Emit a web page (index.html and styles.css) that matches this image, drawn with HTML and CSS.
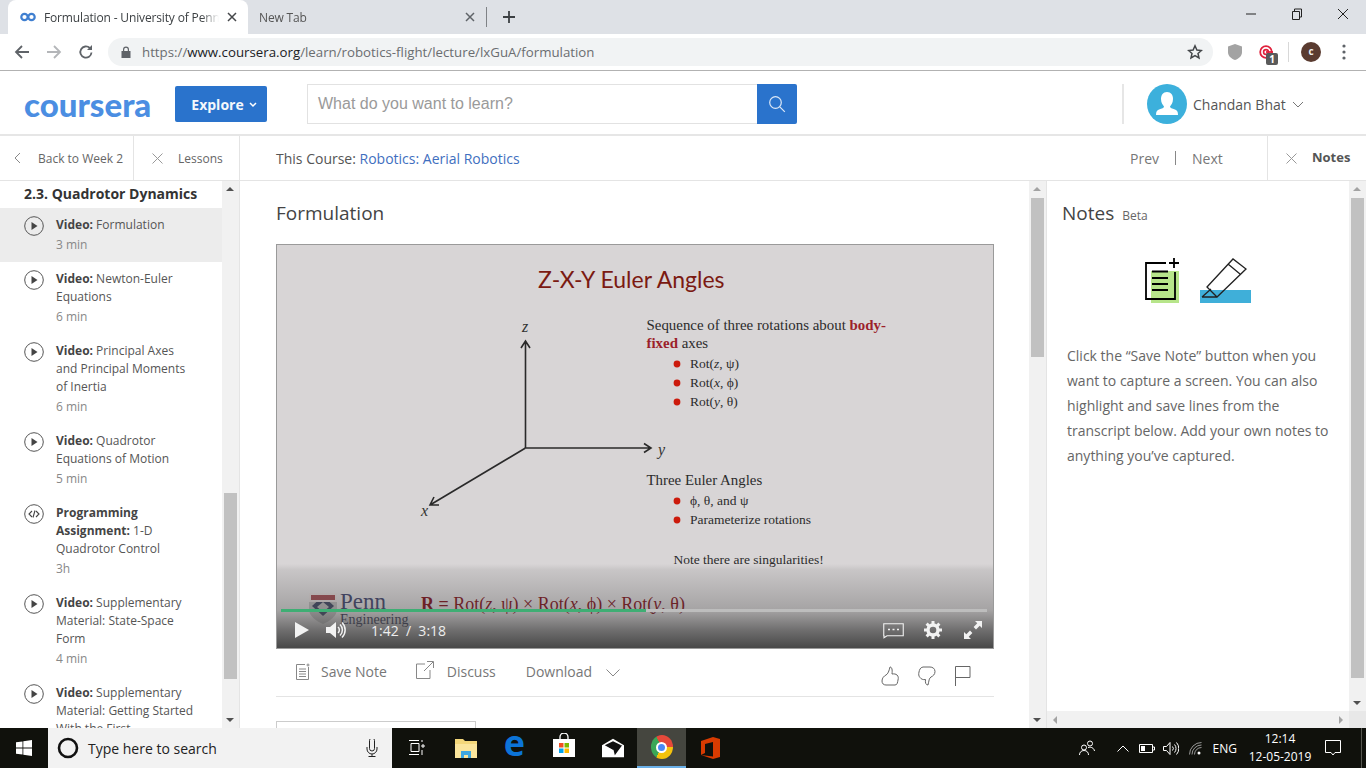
FILE: index.html
```html
<!DOCTYPE html>
<html lang="en">
<head>
    <meta charset="UTF-8">
    <title>Formulation - University of Pennsylvania | Coursera</title>
    <link rel="stylesheet" href="styles.css">
</head>
<body>
    <!-- browser chrome -->
    <div class="tabstrip">
        <div class="tab tab-active">
            <svg class="tab-icon" viewBox="0 0 16 10"><circle cx="4.500" cy="5" r="3.200" fill="none" stroke="#3f7fd0" stroke-width="2.200"/><circle cx="11.500" cy="5" r="3.200" fill="none" stroke="#3f7fd0" stroke-width="2.200"/></svg>
            <span class="tab-title">Formulation - University of Pennsylvania</span>
            <svg class="tab-close" viewBox="0 0 10 10"><path d="M1 1l8 8M9 1l-8 8" stroke="#45474a" stroke-width="1.500"/></svg>
        </div>
        <div class="tab">
            <span class="tab-title">New Tab</span>
            <svg class="tab-close" viewBox="0 0 10 10"><path d="M1 1l8 8M9 1l-8 8" stroke="#5f6368" stroke-width="1.500"/></svg>
        </div>
        <div class="tab-sep"></div>
        <svg class="tab-new" viewBox="0 0 12 12"><path d="M6 0v12M0 6h12" stroke="#3c4043" stroke-width="1.800"/></svg>
        <div class="window-btns">
            <svg viewBox="0 0 12 12"><path d="M1 6h10" stroke="#222" stroke-width="1"/></svg>
            <svg viewBox="0 0 12 12"><path d="M1.500 3.500h7v8h-7zM3.500 3.500v-2.500h7v8h-2" fill="none" stroke="#222" stroke-width="1"/></svg>
            <svg viewBox="0 0 12 12"><path d="M1 1l10 10M11 1l-10 10" stroke="#222" stroke-width="1"/></svg>
        </div>
    </div>
    <div class="toolbar">
        <svg class="nav-icon" viewBox="0 0 16 16"><path d="M15 8H2M8 2L2 8l6 6" fill="none" stroke="#5f6368" stroke-width="1.800"/></svg>
        <svg class="nav-icon" viewBox="0 0 16 16"><path d="M1 8h13M8 2l6 6-6 6" fill="none" stroke="#b4b6b9" stroke-width="1.800"/></svg>
        <svg class="nav-icon" viewBox="0 0 16 16"><path d="M13.500 8.500A5.600 5.600 0 1 1 11.800 4" fill="none" stroke="#5f6368" stroke-width="1.800"/><path d="M14 1v5H9z" fill="#5f6368"/></svg>
        <div class="omnibox">
            <svg class="lock" viewBox="0 0 10 12"><path d="M2 5V3.500a3 3 0 0 1 6 0V5h1.500v7H.5V5zM3.200 5h3.600V3.500a1.800 1.800 0 0 0-3.600 0z" fill="#5f6368"/></svg>
            <span class="url">https://<b>www.coursera.org</b>/learn/robotics-flight/lecture/lxGuA/formulation</span>
            <svg class="star" viewBox="0 0 16 16"><path d="M8 1.800l1.900 4.200 4.500.5-3.400 3 1 4.500L8 11.700 4 14l1-4.500-3.400-3 4.500-.5z" fill="none" stroke="#44474a" stroke-width="1.500"/></svg>
        </div>
        <svg class="ext-shield" viewBox="0 0 14 16"><path d="M7 0l7 2.500V8c0 4-3 6.500-7 8-4-1.500-7-4-7-8V2.500z" fill="#a3a3a3"/></svg>
        <div class="ext-target">
            <svg viewBox="0 0 14 14"><circle cx="7" cy="7" r="5.800" fill="none" stroke="#e0213c" stroke-width="1.800"/><circle cx="7" cy="7" r="2.400" fill="none" stroke="#e0213c" stroke-width="1.600"/><path d="M7 7h7" stroke="#e0213c" stroke-width="1.800"/></svg>
            <span class="ext-badge">1</span>
        </div>
        <div class="toolbar-sep"></div>
        <div class="profile-dot">c</div>
        <svg class="menu-dots" viewBox="0 0 4 16"><circle cx="2" cy="2" r="1.600"/><circle cx="2" cy="8" r="1.600"/><circle cx="2" cy="14" r="1.600"/></svg>
    </div>

    <!-- site header -->
    <header class="site-header">
        <div class="logo">coursera</div>
        <button class="explore">Explore <svg viewBox="0 0 8 6"><path d="M1 1l3 3 3-3" fill="none" stroke="#fff" stroke-width="1.500"/></svg></button>
        <div class="search">
            <div class="search-input">What do you want to learn?</div>
            <div class="search-btn"><svg viewBox="0 0 18 18"><circle cx="7.500" cy="7.500" r="5.800" fill="none" stroke="#dce8f7" stroke-width="1.200"/><path d="M11.800 11.800l5 5" stroke="#dce8f7" stroke-width="1.200"/></svg></div>
        </div>
        <div class="user">
            <svg class="avatar" viewBox="0 0 40 40"><circle cx="20" cy="20" r="20" fill="#3cb0dc"/><path d="M20 8c4 0 6 3 6 7s-2 6-3 7.500c0 1.500 2 2 5 3 2 .7 3 2 3 5.500H9c0-3.500 1-4.800 3-5.500 3-1 5-1.500 5-3C16 21 14 19 14 15s2-7 6-7z" fill="#fff"/></svg>
            <span class="user-name">Chandan Bhat</span>
            <svg class="user-caret" viewBox="0 0 12 7"><path d="M1 1l5 5 5-5" fill="none" stroke="#777" stroke-width="1"/></svg>
        </div>
    </header>

    <!-- course bar -->
    <div class="course-bar">
        <div class="bar-cell cell-back">
            <svg viewBox="0 0 7 12"><path d="M6 1L1 6l5 5" fill="none" stroke="#888" stroke-width="1"/></svg>
            <span>Back to Week 2</span>
        </div>
        <div class="bar-cell cell-lessons">
            <svg viewBox="0 0 11 11"><path d="M.5.5l10 10M10.500.5l-10 10" stroke="#999" stroke-width="1"/></svg>
            <span>Lessons</span>
        </div>
        <div class="this-course">This Course: <a>Robotics: Aerial Robotics</a></div>
        <div class="pager"><span>Prev</span><i></i><span>Next</span></div>
        <div class="bar-cell cell-notes">
            <svg viewBox="0 0 11 11"><path d="M.5.5l10 10M10.500.5l-10 10" stroke="#999" stroke-width="1"/></svg>
            <b>Notes</b>
        </div>
    </div>

    <div class="main">
        <!-- lessons list -->
        <aside class="sidebar">
            <div class="lesson-list">
                <h3>2.3. Quadrotor Dynamics</h3>
                <div class="lesson current">
                    <svg class="lesson-icon" viewBox="0 0 20 20"><circle cx="10" cy="10" r="9.300" fill="none" stroke="#555"/><path d="M7.500 6l6 4-6 4z" fill="#444"/></svg>
                    <div class="lesson-text"><p><b>Video:</b> Formulation</p><small>3 min</small></div>
                </div>
                <div class="lesson">
                    <svg class="lesson-icon" viewBox="0 0 20 20"><circle cx="10" cy="10" r="9.300" fill="none" stroke="#555"/><path d="M7.500 6l6 4-6 4z" fill="#444"/></svg>
                    <div class="lesson-text"><p><b>Video:</b> Newton-Euler Equations</p><small>6 min</small></div>
                </div>
                <div class="lesson">
                    <svg class="lesson-icon" viewBox="0 0 20 20"><circle cx="10" cy="10" r="9.300" fill="none" stroke="#555"/><path d="M7.500 6l6 4-6 4z" fill="#444"/></svg>
                    <div class="lesson-text"><p><b>Video:</b> Principal Axes and Principal Moments of Inertia</p><small>6 min</small></div>
                </div>
                <div class="lesson">
                    <svg class="lesson-icon" viewBox="0 0 20 20"><circle cx="10" cy="10" r="9.300" fill="none" stroke="#555"/><path d="M7.500 6l6 4-6 4z" fill="#444"/></svg>
                    <div class="lesson-text"><p><b>Video:</b> Quadrotor Equations of Motion</p><small>5 min</small></div>
                </div>
                <div class="lesson">
                    <svg class="lesson-icon" viewBox="0 0 20 20"><circle cx="10" cy="10" r="9.300" fill="none" stroke="#555"/><path d="M8 7l-3 3 3 3M12 7l3 3-3 3M11 6.500l-2 7" fill="none" stroke="#444" stroke-width="1.100"/></svg>
                    <div class="lesson-text"><p><b>Programming Assignment:</b> 1-D Quadrotor Control</p><small>3h</small></div>
                </div>
                <div class="lesson">
                    <svg class="lesson-icon" viewBox="0 0 20 20"><circle cx="10" cy="10" r="9.300" fill="none" stroke="#555"/><path d="M7.500 6l6 4-6 4z" fill="#444"/></svg>
                    <div class="lesson-text"><p><b>Video:</b> Supplementary Material: State-Space Form</p><small>4 min</small></div>
                </div>
                <div class="lesson">
                    <svg class="lesson-icon" viewBox="0 0 20 20"><circle cx="10" cy="10" r="9.300" fill="none" stroke="#555"/><path d="M7.500 6l6 4-6 4z" fill="#444"/></svg>
                    <div class="lesson-text"><p><b>Video:</b> Supplementary Material: Getting Started With the First</p></div>
                </div>
            </div>
            <div class="vscroll">
                <div class="arrow-up"></div>
                <div class="track"><div class="thumb thumb-side"></div></div>
                <div class="arrow-down"></div>
            </div>
        </aside>

        <!-- lecture -->
        <section class="content">
            <h1>Formulation</h1>
            <div class="video">
                <svg class="slide" viewBox="276 244 718 405">
                    <text x="538" y="288" class="slide-title">Z-X-Y Euler Angles</text>
                    <g class="axis">
                        <path d="M525.500 448V341M521 348l4.500-7 4.500 7"/>
                        <path d="M525.500 448H651M644 443.500l7 4.500-7 4.500"/>
                        <path d="M525.500 448L430 505M434 497l-4 8 9 0"/>
                    </g>
                    <text x="522" y="332" class="axis-label">z</text>
                    <text x="658" y="455" class="axis-label">y</text>
                    <text x="421" y="516" class="axis-label">x</text>
                    <text x="646.500" y="330" class="slide-text">Sequence of three rotations about <tspan class="slide-em">body-</tspan></text>
                    <text x="646.500" y="348" class="slide-text"><tspan class="slide-em">fixed</tspan> axes</text>
                    <circle cx="677" cy="364" r="3.400" class="bullet"/>
                    <text x="690" y="368" class="slide-small">Rot(<tspan font-style="italic">z</tspan>, ψ)</text>
                    <circle cx="677" cy="383" r="3.400" class="bullet"/>
                    <text x="690" y="387" class="slide-small">Rot(<tspan font-style="italic">x</tspan>, ϕ)</text>
                    <circle cx="677" cy="402" r="3.400" class="bullet"/>
                    <text x="690" y="406" class="slide-small">Rot(<tspan font-style="italic">y</tspan>, θ)</text>
                    <text x="646.500" y="485" class="slide-text">Three Euler Angles</text>
                    <circle cx="677" cy="501" r="3.400" class="bullet"/>
                    <text x="690" y="505" class="slide-small">ϕ, θ, and ψ</text>
                    <circle cx="677" cy="520" r="3.400" class="bullet"/>
                    <text x="690" y="524" class="slide-small">Parameterize rotations</text>
                    <text x="673.500" y="564" class="slide-small">Note there are singularities!</text>
                    <path d="M309 602h28v7c0 7-7 12-14 15-7-3-14-8-14-15z" fill="#b5b3b4"/>
                    <path d="M323 596l11 10-11 10-11-10z" fill="#3e4560"/>
                    <path d="M323 602l6 5-6 5-6-5z" fill="#b5b3b4"/>
                    <path d="M309 593h28v9h-28z" fill="#d9d2d2"/>
                    <path d="M311 595h24v5h-24z" fill="#9c4a50"/>
                    <text x="340" y="609" class="penn">Penn</text>
                    <text x="340" y="624" class="penn-sub">Engineering</text>
                    <text x="421" y="610" class="formula"><tspan font-weight="bold">R =</tspan> Rot(<tspan font-style="italic">z</tspan>, ψ) × Rot(<tspan font-style="italic">x</tspan>, ϕ) × Rot(<tspan font-style="italic">y</tspan>, θ)</text>
                </svg>
                <div class="video-shade"></div>
                <div class="progress"><div class="progress-done"></div></div>
                <div class="video-controls">
                    <svg class="vc-play" viewBox="0 0 14 16"><path d="M0 0l14 8-14 8z" fill="#f2f2f2"/></svg>
                    <svg class="vc-vol" viewBox="0 0 20 18"><path d="M0 6h4l6-5v16l-6-5H0z" fill="#f2f2f2"/><path d="M12 6a4 4 0 0 1 0 6M14 3.500a7.500 7.500 0 0 1 0 11M16 1.500a10.500 10.500 0 0 1 0 15" fill="none" stroke="#f2f2f2" stroke-width="1.500"/></svg>
                    <span class="vc-time">1:42 &nbsp;/&nbsp; 3:18</span>
                    <svg class="vc-cc" viewBox="0 0 21 18"><path d="M.75 2.750h19.500v12H4l-3 2v-2H.75z" fill="none" stroke="#f2f2f2" stroke-width="1.100"/><path d="M5 8.500h2M9.500 8.500h2M14 8.500h2" stroke="#f2f2f2" stroke-width="1.600"/></svg>
                    <svg class="vc-gear" viewBox="0 0 18 18"><circle cx="9" cy="9" r="5" fill="none" stroke="#f2f2f2" stroke-width="3.400"/><path d="M9 0v4M9 14v4M0 9h4M14 9h4M2.600 2.600l2.900 2.900M12.500 12.500l2.900 2.900M15.400 2.600l-2.900 2.900M5.500 12.500l-2.900 2.900" stroke="#f2f2f2" stroke-width="3"/></svg>
                    <svg class="vc-full" viewBox="0 0 18 18"><path d="M11 0h7v7l-2.300-2.300-3.700 3.700-2.400-2.400 3.700-3.700zM0 18v-7l2.300 2.300 3.700-3.700 2.400 2.400-3.700 3.700L7 18z" fill="#f2f2f2"/></svg>
                </div>
            </div>
            <div class="actions">
                <div class="action action-save">
                    <svg viewBox="0 0 14 17"><path d="M9 1.500H.5v15h12V4M3 6h7M3 8.500h7M3 11h7M3 13.500h7M10.500 2h3M12 .5v3" fill="none" stroke="#888"/></svg>
                    <span>Save Note</span>
                </div>
                <div class="action action-discuss">
                    <svg viewBox="0 0 18 18"><path d="M9 3H.5v14.500H14V9M8 10L17 1M11 .5h6.500V7" fill="none" stroke="#888"/></svg>
                    <span>Discuss</span>
                </div>
                <div class="action action-download">
                    <span>Download</span>
                    <svg viewBox="0 0 14 8"><path d="M.5.5L7 7l6.500-6.500" fill="none" stroke="#888"/></svg>
                </div>
                <div class="feedback">
                    <svg viewBox="0 0 18 20"><path d="M5 9c2-1 3-4 4-8 2 0 2.500 3 2 7 2-.3 4 0 5 1 1.500 1.500 1.500 3 1 5-.5 2-.5 5-3 5H5c-2.500 0-4-1.500-4-4 0-3 2-5 4-6z" fill="none" stroke="#666"/></svg>
                    <svg viewBox="0 0 18 20"><path d="M13 11c-2 1-2 4-3 8-2 0-3-2-2.500-5.500C5 14 3 13 2 11.500.5 10 .5 8 1 6c.5-2 1-4.500 4-5h7c2.500 0 5 1.500 5 4.500s-2 4.500-4 5.500z" fill="none" stroke="#666"/></svg>
                    <svg class="flag" viewBox="0 0 16 20"><path d="M.5 20V.5h14.500v11H.5" fill="none" stroke="#666"/></svg>
                </div>
            </div>
            <div class="cut-box"></div>
        </section>
        <div class="vscroll vscroll-content">
            <div class="arrow-up"></div>
            <div class="track"><div class="thumb thumb-content"></div></div>
            <div class="arrow-down"></div>
        </div>

        <!-- notes -->
        <aside class="notes">
            <div class="notes-body">
                <div class="notes-head"><h2>Notes</h2><span>Beta</span></div>
                <svg class="notes-art" viewBox="1144 257 108 47">
                    <rect x="1151" y="271" width="28" height="32" fill="#b7e58a"/>
                    <path d="M1166 263h-20v36h29v-27" fill="none" stroke="#000" stroke-width="1.800"/>
                    <path d="M1174 258v10M1169 263h10" stroke="#000" stroke-width="1.800"/>
                    <path d="M1152 271.500h16M1152 278h16M1152 284h16M1152 290h16" stroke="#000" stroke-width="1.800"/>
                    <rect x="1200" y="290" width="51" height="13" fill="#3fafd9"/>
                    <path d="M1207 287l26-28 13 10-29 28zM1228 264l12 10M1207 287l3 3 4 4 3 3M1202 297h15M1202 297l9-8" fill="none" stroke="#222" stroke-width="1.300"/>
                </svg>
                <p>Click the “Save Note” button when you want to capture a screen. You can also highlight and save lines from the transcript below. Add your own notes to anything you’ve captured.</p>
            </div>
            <div class="hscroll">
                <div class="arrow-left"></div>
                <div class="arrow-right"></div>
            </div>
        </aside>
        <div class="vscroll vscroll-notes">
            <div class="arrow-up"></div>
            <div class="track"><div class="thumb thumb-notes"></div></div>
            <div class="arrow-down"></div>
            <div class="corner"></div>
        </div>
    </div>

    <!-- windows taskbar -->
    <footer class="taskbar">
        <div class="start">
            <svg viewBox="0 0 16 16"><path d="M0 2.300l6.500-.9v6.200H0zM7.300 1.300L16 0v7.600H7.300zM0 8.400h6.500v6.200L0 13.700zM7.300 8.400H16V16l-8.700-1.300z" fill="#fff"/></svg>
        </div>
        <div class="task-search">
            <svg class="cortana" viewBox="0 0 22 22"><circle cx="11" cy="11" r="9" fill="none" stroke="#111" stroke-width="2.600"/></svg>
            <span>Type here to search</span>
            <svg class="mic" viewBox="0 0 12 18"><path d="M3.500 1.500a2.500 2.500 0 0 1 5 0v8a2.500 2.500 0 0 1-5 0zM1 8v2a5 5 0 0 0 10 0V8M6 15v2.500M2.500 17.500h7" fill="none" stroke="#222"/></svg>
        </div>
        <div class="task-item">
            <svg viewBox="0 0 16 16" class="tk-view"><path d="M0 .5h10M2 3.500h8v8H2zM0 14.500h10M13 0v2M13 5h2v2h-2zM13 10v5" fill="none" stroke="#fff"/></svg>
        </div>
        <div class="task-item">
            <svg viewBox="0 0 22 22" class="tk-app"><path d="M0 2h8l2 2h12v17H0z" fill="#f4d77a"/><path d="M0 7h22v14H0z" fill="#fbe59c"/><path d="M6 14h10v7h-3v-3H9v3H6z" fill="#3fa7e0"/></svg>
        </div>
        <div class="task-item">
            <span class="edge">e</span>
        </div>
        <div class="task-item">
            <svg viewBox="0 0 22 24" class="tk-app tk-store"><path d="M7 7V4a4 4 0 0 1 8 0v3" fill="none" stroke="#fff" stroke-width="1.300"/><path d="M0 6h22v18H0z" fill="#fff"/><path d="M6 10h4.500v4.500H6z" fill="#f25022"/><path d="M11.500 10H16v4.500h-4.500z" fill="#7fba00"/><path d="M6 15.500h4.500V20H6z" fill="#00a4ef"/><path d="M11.500 15.500H16V20h-4.500z" fill="#ffb900"/></svg>
        </div>
        <div class="task-item">
            <svg viewBox="0 0 24 20" class="tk-app"><path d="M0 7L12 0l12 7v13H0z" fill="#fff"/><path d="M3 7l9-4.500L21 7 12 12z" fill="#111"/><path d="M6 8l16-1-8 11-1.500-6z" fill="#111"/></svg>
        </div>
        <div class="task-item task-active">
            <div class="chrome"><div class="chrome-eye"></div></div>
        </div>
        <div class="task-item">
            <svg viewBox="0 0 20 22" class="tk-app"><path d="M0 4L12 0l7 2v18l-7 2L0 18l12 1.500V5L4 7v9l-4 2z" fill="#d83b01"/></svg>
        </div>
        <div class="tray">
            <svg class="tr-people" viewBox="0 0 16 16"><circle cx="5" cy="7.500" r="2.500" fill="none" stroke="#fff"/><circle cx="11" cy="3.500" r="2.500" fill="none" stroke="#fff"/><path d="M.5 15c0-2.500 1.500-4.500 4.500-4.500S9.500 12.500 9.500 15M9 7.500c3-1 6 .5 6.500 3.500" fill="none" stroke="#fff"/></svg>
            <svg class="tr-chev" viewBox="0 0 12 7"><path d="M.5 6.500L6 1l5.500 5.500" fill="none" stroke="#fff"/></svg>
            <svg class="tr-batt" viewBox="0 0 16 9"><path d="M.5.5h13v8H.5zM14 3h1.500v3H14" fill="none" stroke="#fff"/><path d="M2 2h4v5H2z" fill="#fff"/></svg>
            <svg class="tr-vol" viewBox="0 0 16 13"><path d="M.5 4.500h3l3.500-4v12l-3.500-4h-3zM9.500 4.500a3 3 0 0 1 0 4M11.500 2.500a6 6 0 0 1 0 8M13.500.5a9 9 0 0 1 0 12" fill="none" stroke="#fff"/></svg>
            <svg class="tr-wifi" viewBox="0 0 14 13"><path d="M.5 12.500a12 12 0 0 1 12-12M3 12.500a9.500 9.500 0 0 1 9.500-9.500M5.500 12.500a7 7 0 0 1 7-7" fill="none" stroke="#bbb" stroke-width=".8"/><circle cx="10" cy="11" r="1.500" fill="#fff"/></svg>
            <span class="tr-lang">ENG</span>
            <div class="tr-clock"><span>12:14</span><span>12-05-2019</span></div>
            <svg class="tr-note" viewBox="0 0 16 16"><path d="M.5.5h15v12H10l-2 2.500-2-2.500H.5z" fill="none" stroke="#fff"/></svg>
            <div class="tr-desk"></div>
        </div>
    </footer>
</body>
</html>
```

FILE: styles.css
```css
* {
    box-sizing: border-box;
}
html, body {
    margin: 0;
    padding: 0;
}
body {
    width: 1366px;
    height: 768px;
    overflow: hidden;
    background: #fff;
    font-family: "Open Sans", sans-serif;
    color: #444;
    display: flex;
    flex-direction: column;
}
svg {
    display: block;
    flex: none;
}

/* tab strip */
.tabstrip {
    height: 34px;
    flex: none;
    background: #dee1e6;
    display: flex;
    padding-left: 8px;
    font-size: 12px;
}
.tab {
    width: 240px;
    height: 34px;
    padding: 0 7px 0 12px;
    display: flex;
    align-items: center;
    color: #555;
}
.tab:nth-child(2) {
    width: 238px;
    padding-left: 11px;
}
.tab-active {
    background: #fff;
    border-radius: 8px 8px 0 0;
    color: #3c4043;
}
.tab-icon {
    width: 16px;
    height: 10px;
    margin-right: 8px;
}
.tab-title {
    flex: 1;
    overflow: hidden;
    white-space: nowrap;
    letter-spacing: -.15px;
    -webkit-mask-image: linear-gradient(to right, #000 90%, transparent);
}
.tab-close {
    width: 10px;
    height: 10px;
    margin: 0 4px 0 8px;
}
.tab-sep {
    width: 1px;
    height: 20px;
    margin: 7px 0;
    background: #7f8286;
}
.tab-new {
    width: 12px;
    height: 12px;
    margin: 11px 0 0 16px;
}
.window-btns {
    margin-left: auto;
    display: flex;
}
.window-btns svg {
    width: 12px;
    height: 12px;
    margin: 8px 17px 0 17px;
}

/* toolbar */
.toolbar {
    height: 37px;
    flex: none;
    display: flex;
    align-items: center;
    border-bottom: 1px solid #b2b2b2;
    padding: 0 0 1px 14px;
    background: #fff;
}
.nav-icon {
    width: 16px;
    height: 16px;
    margin-right: 16px;
}
.nav-icon:nth-child(3) {
    margin-right: 14px;
}
.omnibox {
    width: 1105px;
    height: 28px;
    border-radius: 14px;
    background: #f1f3f4;
    display: flex;
    align-items: center;
    padding: 0 10px 0 13px;
}
.lock {
    width: 10px;
    height: 12px;
    margin-right: 11px;
}
.url {
    flex: 1;
    font-size: 13.270px;
    color: #6a6d70;
    white-space: nowrap;
}
.url b {
    font-weight: 400;
    color: #202124;
}
.star {
    width: 16px;
    height: 16px;
}
.ext-shield {
    width: 14px;
    height: 16px;
    margin-left: 15px;
}
.ext-target {
    position: relative;
    width: 14px;
    height: 14px;
    margin-left: 17px;
}
.ext-badge {
    position: absolute;
    left: 7px;
    top: 8px;
    width: 12px;
    height: 12px;
    border-radius: 2px;
    background: #5a5a5a;
    color: #fff;
    font-size: 10px;
    font-weight: 700;
    line-height: 12px;
    text-align: center;
}
.toolbar-sep {
    width: 1px;
    height: 20px;
    margin-left: 15px;
    background: #d8d8d8;
}
.profile-dot {
    width: 20px;
    height: 20px;
    margin-left: 12px;
    border-radius: 50%;
    background: #5a3b30;
    color: #eee;
    font-size: 10px;
    font-weight: 700;
    line-height: 19px;
    text-align: center;
}
.menu-dots {
    width: 4px;
    height: 16px;
    margin-left: 21px;
    fill: #5f6368;
}

/* site header */
.site-header {
    height: 65px;
    flex: none;
    display: flex;
    align-items: center;
    border-bottom: 2px solid #e6e6e6;
    padding: 3px 0 0 24px;
}
.logo {
    width: 151px;
    font-family: "Lato", sans-serif;
    font-size: 33px;
    font-weight: 900;
    line-height: 36px;
    color: #4b8ee2;
}
.explore {
    width: 92px;
    height: 36px;
    border: 0;
    border-radius: 2px;
    padding: 0 0 0 6px;
    background: #2a73cc;
    color: #f4f8fc;
    font: 700 14px "Open Sans", sans-serif;
    display: flex;
    align-items: center;
    justify-content: center;
    gap: 5px;
}
.explore svg {
    width: 8px;
    height: 6px;
    margin-top: 2px;
}
.search {
    display: flex;
    margin-left: 40px;
    height: 40px;
}
.search-input {
    width: 450px;
    border: 1px solid #e2e2e2;
    border-right: 0;
    padding-left: 10px;
    font-family: "Liberation Sans", Arial, sans-serif;
    font-size: 16px;
    line-height: 37px;
    color: #9a9a9a;
}
.search-btn {
    width: 40px;
    background: #2a73cc;
    border-radius: 0 2px 2px 0;
    display: flex;
    align-items: center;
    justify-content: center;
}
.search-btn svg {
    width: 18px;
    height: 18px;
}
.user {
    height: 40px;
    margin-left: 325px;
    padding-left: 23px;
    border-left: 2px solid #e6e6e6;
    display: flex;
    align-items: center;
}
.avatar {
    width: 40px;
    height: 40px;
}
.user-name {
    margin-left: 6px;
    font-size: 14px;
    color: #555;
}
.user-caret {
    width: 12px;
    height: 7px;
    margin-left: 6px;
}

/* course bar */
.course-bar {
    height: 45px;
    flex: none;
    display: flex;
    align-items: stretch;
    border-bottom: 1px solid #e4e4e4;
    font-size: 14px;
}
.bar-cell {
    display: flex;
    align-items: center;
    font-size: 12px;
    color: #666;
}
.cell-back {
    width: 134px;
    padding-left: 14px;
    border-right: 1px solid #e4e4e4;
    gap: 17px;
}
.cell-back svg {
    width: 7px;
    height: 12px;
}
.cell-lessons {
    width: 106px;
    padding-left: 18px;
    border-right: 1px solid #e4e4e4;
    gap: 15px;
}
.cell-lessons svg, .cell-notes svg {
    width: 11px;
    height: 11px;
}
.this-course {
    flex: 1;
    padding-left: 36px;
    line-height: 45px;
    color: #555;
}
.this-course a {
    color: #3f6fc0;
}
.pager {
    display: flex;
    align-items: center;
    width: 137px;
    color: #777;
}
.pager i {
    width: 1px;
    height: 14px;
    margin: 0 16px;
    background: #888;
}
.cell-notes {
    width: 99px;
    padding-left: 18px;
    border-left: 1px solid #e4e4e4;
    gap: 15px;
}
.cell-notes b {
    margin-top: -3px;
    font-size: 13px;
    color: #555;
}

/* main area */
.main {
    height: 547px;
    flex: none;
    display: flex;
    overflow: hidden;
}
.sidebar {
    width: 240px;
    flex: none;
    display: flex;
    border-right: 1px solid #e4e4e4;
}
.lesson-list {
    width: 222px;
    overflow: hidden;
}
.lesson-list h3 {
    margin: 0;
    height: 27px;
    padding-left: 24px;
    font-size: 14px;
    font-weight: 700;
    line-height: 26px;
    color: #333;
}
.lesson {
    display: flex;
    padding: 8px 0 8px 24px;
}
.lesson.current {
    background: #ececec;
}
.lesson-icon {
    width: 20px;
    height: 20px;
    margin-right: 12px;
}
.lesson-text {
    width: 140px;
    font-size: 12px;
    line-height: 18px;
    color: #555;
}
.lesson-text p {
    margin: 0;
}
.lesson-text b {
    color: #444;
}
.lesson-text small {
    display: block;
    margin-top: 2px;
    font-size: 12px;
    color: #888;
}

/* scrollbars */
.vscroll {
    width: 17px;
    flex: none;
    display: flex;
    flex-direction: column;
    background: #f1f1f1;
}
.arrow-up, .arrow-down {
    height: 17px;
    flex: none;
    position: relative;
}
.arrow-up:before, .arrow-down:before {
    content: "";
    position: absolute;
    left: 4px;
    border-left: 4px solid transparent;
    border-right: 4px solid transparent;
}
.arrow-up:before {
    top: 6px;
    border-bottom: 4px solid #505050;
}
.arrow-down:before {
    top: 7px;
    border-top: 4px solid #505050;
}
.track {
    flex: 1;
    padding: 0 2px;
}
.thumb {
    background: #c1c1c1;
}
.thumb-side {
    height: 186px;
    margin-top: 295px;
}
.thumb-content {
    height: 159px;
}
.thumb-notes {
    height: 480px;
}
.vscroll-content .arrow-up:before, .vscroll-notes .arrow-up:before {
    border-bottom-color: #a3a3a3;
}
.corner {
    height: 17px;
    flex: none;
    background: #e8e8e8;
}

/* lecture */
.content {
    width: 789px;
    flex: none;
    padding: 0 35px 0 36px;
    overflow: hidden;
}
.content h1 {
    margin: 0;
    height: 63px;
    font-size: 19px;
    font-weight: 400;
    line-height: 64px;
    color: #444;
}
.video {
    position: relative;
    width: 718px;
    height: 405px;
    border: 1px solid #9a9a9a;
    background: #d8d5d6;
    overflow: hidden;
}
.slide {
    position: absolute;
    left: -1px;
    top: -1px;
    width: 718px;
    height: 405px;
}
.slide-title {
    font-family: "Lato", sans-serif;
    font-size: 23px;
    fill: #7b1a12;
}
.axis path {
    fill: none;
    stroke: #2a2a2a;
    stroke-width: 1.600;
}
.axis-label {
    font-family: "Liberation Serif", serif;
    font-size: 16px;
    font-style: italic;
    fill: #333;
}
.slide-text {
    font-family: "Liberation Serif", serif;
    font-size: 14.900px;
    fill: #2c2c2c;
}
.slide-em {
    font-weight: 700;
    fill: #9c1f2a;
}
.slide-small {
    font-family: "Liberation Serif", serif;
    font-size: 13.500px;
    fill: #2c2c2c;
}
.bullet {
    fill: #cc1a0c;
}
.penn {
    font-family: "Liberation Serif", serif;
    font-size: 23px;
    fill: #3f4268;
}
.penn-sub {
    font-family: "Liberation Serif", serif;
    font-size: 14px;
    fill: #33344f;
}
.formula {
    font-family: "Liberation Serif", serif;
    font-size: 18px;
    fill: #7d1119;
}
.video-shade {
    position: absolute;
    left: 0;
    right: 0;
    bottom: 0;
    height: 84px;
    background: linear-gradient(to bottom, rgba(70, 70, 70, 0) 0%, rgba(70, 70, 70, .11) 7%, rgba(70, 70, 70, .35) 55%, rgba(70, 70, 70, .72) 79%, rgba(70, 70, 70, .99) 100%);
}
.progress {
    position: absolute;
    left: 4px;
    right: 6px;
    top: 364px;
    height: 3px;
    background: #bdbdbd;
}
.progress-done {
    width: 51.700%;
    height: 3px;
    background: #3fae74;
}
.video-controls {
    position: absolute;
    left: 18px;
    right: 11px;
    bottom: 8px;
    height: 20px;
    display: flex;
    align-items: center;
}
.vc-play {
    width: 14px;
    height: 16px;
}
.vc-vol {
    width: 20px;
    height: 18px;
    margin-left: 17px;
}
.vc-time {
    margin-left: 25px;
    font-size: 14px;
    color: #eee;
}
.vc-cc {
    width: 21px;
    height: 18px;
    margin-left: auto;
}
.vc-gear {
    width: 18px;
    height: 18px;
    margin-left: 20px;
}
.vc-full {
    width: 18px;
    height: 18px;
    margin-left: 22px;
}

/* actions under the video */
.actions {
    width: 718px;
    height: 48px;
    display: flex;
    align-items: center;
    border-bottom: 1px solid #e4e4e4;
    padding-bottom: 2px;
    font-size: 14px;
    color: #777;
}
.action {
    display: flex;
    align-items: center;
}
.action-save {
    margin-left: 20px;
    gap: 11px;
}
.action-save svg {
    width: 14px;
    height: 17px;
}
.action-discuss {
    margin-left: 29px;
    gap: 13px;
}
.action-discuss svg {
    width: 18px;
    height: 18px;
    margin-top: -4px;
}
.action-download {
    margin-left: 30px;
    gap: 14px;
}
.action-download svg {
    width: 14px;
    height: 8px;
    margin-top: 2px;
}
.feedback {
    margin-left: auto;
    margin-right: 23px;
    display: flex;
    gap: 19px;
    padding-top: 8px;
}
.feedback svg {
    width: 18px;
    height: 20px;
}
.feedback .flag {
    width: 16px;
}
.cut-box {
    width: 200px;
    height: 30px;
    margin-top: 24px;
    border: 1px solid #ccc;
}

/* notes panel */
.notes {
    width: 303px;
    flex: none;
    display: flex;
    flex-direction: column;
    border-left: 1px solid #e4e4e4;
}
.notes-body {
    flex: 1;
    padding: 0 20px;
}
.notes-head {
    display: flex;
    align-items: baseline;
    height: 76px;
    margin-left: -5px;
    padding-top: 17px;
}
.notes-head h2 {
    margin: 0;
    font-size: 19px;
    font-weight: 400;
    line-height: 30px;
    color: #444;
}
.notes-head span {
    margin-left: 8px;
    font-size: 12px;
    color: #666;
}
.notes-art {
    width: 108px;
    height: 47px;
    margin-left: 77px;
}
.notes-body p {
    margin: 39px 0 0;
    font-size: 14px;
    line-height: 25px;
    color: #666;
}
.hscroll {
    height: 17px;
    flex: none;
    background: #f1f1f1;
    display: flex;
    justify-content: space-between;
    align-items: center;
    padding: 0 6px;
}
.arrow-left {
    border-top: 4px solid transparent;
    border-bottom: 4px solid transparent;
    border-right: 4px solid #a3a3a3;
}
.arrow-right {
    border-top: 4px solid transparent;
    border-bottom: 4px solid transparent;
    border-left: 4px solid #a3a3a3;
}

/* taskbar */
.taskbar {
    height: 40px;
    flex: none;
    display: flex;
    align-items: stretch;
    background: #10110c;
    color: #fff;
}
.start {
    width: 48px;
    display: flex;
    align-items: center;
    justify-content: center;
}
.start svg {
    width: 16px;
    height: 16px;
}
.task-search {
    width: 344px;
    background: #f2f2f2;
    display: flex;
    align-items: center;
    padding-left: 9px;
    color: #222;
    font-size: 14px;
}
.cortana {
    width: 22px;
    height: 22px;
    margin-right: 9px;
}
.mic {
    width: 12px;
    height: 18px;
    margin-left: auto;
    margin-right: 14px;
}
.task-item {
    width: 49px;
    display: flex;
    align-items: center;
    justify-content: center;
}
.tk-view {
    width: 16px;
    height: 16px;
}
.tk-app {
    width: 22px;
    height: 22px;
}
.tk-store {
    height: 24px;
    margin-top: -6px;
}
.edge {
    font: 700 36px/32px "Open Sans", sans-serif;
    color: #0c74d8;
    margin-top: -10px;
}
.task-active {
    background: #45463f;
    border-bottom: 2px solid #6ab0e8;
}
.chrome {
    width: 22px;
    height: 24px;
    border-radius: 50%;
    background: conic-gradient(from -30deg, #e5493a 0 120deg, #f4c20d 120deg 240deg, #3aa757 240deg 360deg);
    display: flex;
    align-items: center;
    justify-content: center;
}
.chrome-eye {
    width: 11px;
    height: 11px;
    border: 2px solid #fff;
    border-radius: 50%;
    background: #4a8af4;
}
.tray {
    margin-left: auto;
    display: flex;
    align-items: center;
}
.tr-people {
    width: 16px;
    height: 16px;
}
.tr-chev {
    width: 12px;
    height: 7px;
    margin-left: 22px;
}
.tr-batt {
    width: 16px;
    height: 9px;
    margin-left: 10px;
}
.tr-vol {
    width: 16px;
    height: 13px;
    margin-left: 8px;
}
.tr-wifi {
    width: 14px;
    height: 13px;
    margin-left: 10px;
}
.tr-lang {
    margin-left: 10px;
    font-size: 12px;
}
.tr-clock {
    width: 78px;
    margin-left: 4px;
    display: flex;
    flex-direction: column;
    align-items: center;
    font-size: 12px;
    line-height: 18px;
}
.tr-note {
    width: 16px;
    height: 16px;
    margin-left: 6px;
}
.tr-desk {
    width: 1px;
    height: 40px;
    margin-left: 20px;
    margin-right: 4px;
    background: #55564f;
}
```
